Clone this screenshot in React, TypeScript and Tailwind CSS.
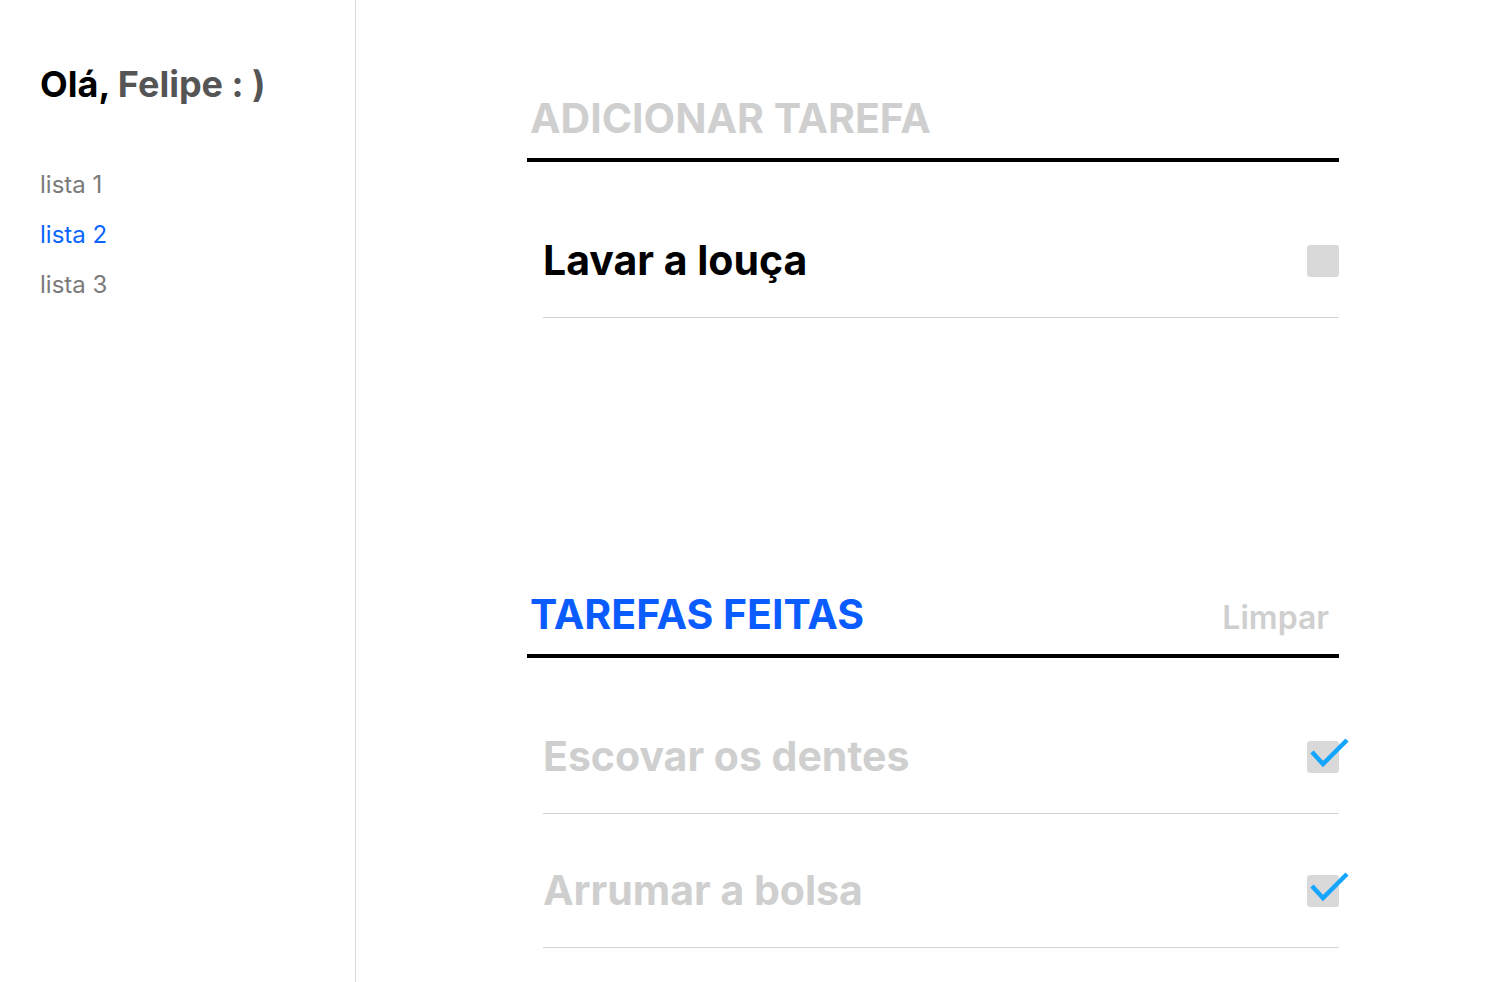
import { FC } from 'react'

const listas = [
    { name: 'lista 1', active: false },
    { name: 'lista 2', active: true },
    { name: 'lista 3', active: false },
]

const feitas = ['Escovar os dentes', 'Arrumar a bolsa']

const Checkbox: FC<{ checked?: boolean }> = ({ checked }) => (
    <div className="relative w-8 h-8 rounded-[3px] bg-[#d9d9d9] shrink-0">
        {checked && (
            <svg
                className="absolute left-0 top-0 overflow-visible"
                width="32"
                height="32"
                viewBox="0 0 32 32"
            >
                <polyline
                    points="5,11 16,23 40,-1"
                    fill="none"
                    stroke="#14a5ff"
                    strokeWidth="4.5"
                />
            </svg>
        )}
    </div>
)

const TaskRow: FC<{ title: string; done?: boolean; first?: boolean }> = ({
    title,
    done,
    first,
}) => (
    <div
        className={
            first
                ? 'ml-4 mt-[42px] flex items-center justify-between border-b border-[#d4d4d4] h-[114px]'
                : 'ml-4 mt-5 flex items-center justify-between border-b border-[#d4d4d4] h-[114px]'
        }
    >
        <span
            className={
                done
                    ? 'text-[41px] font-bold text-[#cfcfcf]'
                    : 'text-[41px] font-bold text-black'
            }
        >
            {title}
        </span>
        <Checkbox checked={done} />
    </div>
)

export default function App() {
    return (
        <div
            className="flex min-h-screen bg-white"
            style={{ fontFamily: 'Inter, "Noto Sans", sans-serif' }}
        >
            <aside className="w-[356px] shrink-0 border-r border-[#dcdcdc] pl-10 pt-[62px]">
                <h1 className="text-[36px] font-bold leading-[44px]">
                    <span className="text-black">Olá, </span>
                    <span className="text-[#555]">Felipe : )</span>
                </h1>
                <nav className="mt-[54px] flex flex-col">
                    {listas.map((item) => (
                        <a
                            key={item.name}
                            href="#"
                            className={
                                item.active
                                    ? 'h-[50px] leading-[50px] text-[24px] text-[#0a66ff]'
                                    : 'h-[50px] leading-[50px] text-[24px] text-[#7a7a7a]'
                            }
                        >
                            {item.name}
                        </a>
                    ))}
                </nav>
            </aside>
            <main className="flex-1 flex justify-center pr-[2px]">
                <div className="w-[812px] pt-[92px] pb-10">
                    <div className="border-b-4 border-black pl-[3px] pb-[14px]">
                        <h2 className="text-[41px] font-bold leading-[52px] text-[#cfcfcf]">
                            ADICIONAR TAREFA
                        </h2>
                    </div>
                    <TaskRow title="Lavar a louça" first />
                    <div className="mt-[270px] border-b-4 border-black pl-[3px] pr-[10px] pb-[14px] flex items-end justify-between">
                        <h2 className="text-[41px] font-bold leading-[52px] text-[#0a5cff]">
                            TAREFAS FEITAS
                        </h2>
                        <button className="text-[32px] font-semibold leading-[44px] text-[#cfcfcf]">
                            Limpar
                        </button>
                    </div>
                    {feitas.map((t, i) => (
                        <TaskRow key={t} title={t} done first={i === 0} />
                    ))}
                </div>
            </main>
        </div>
    )
}
